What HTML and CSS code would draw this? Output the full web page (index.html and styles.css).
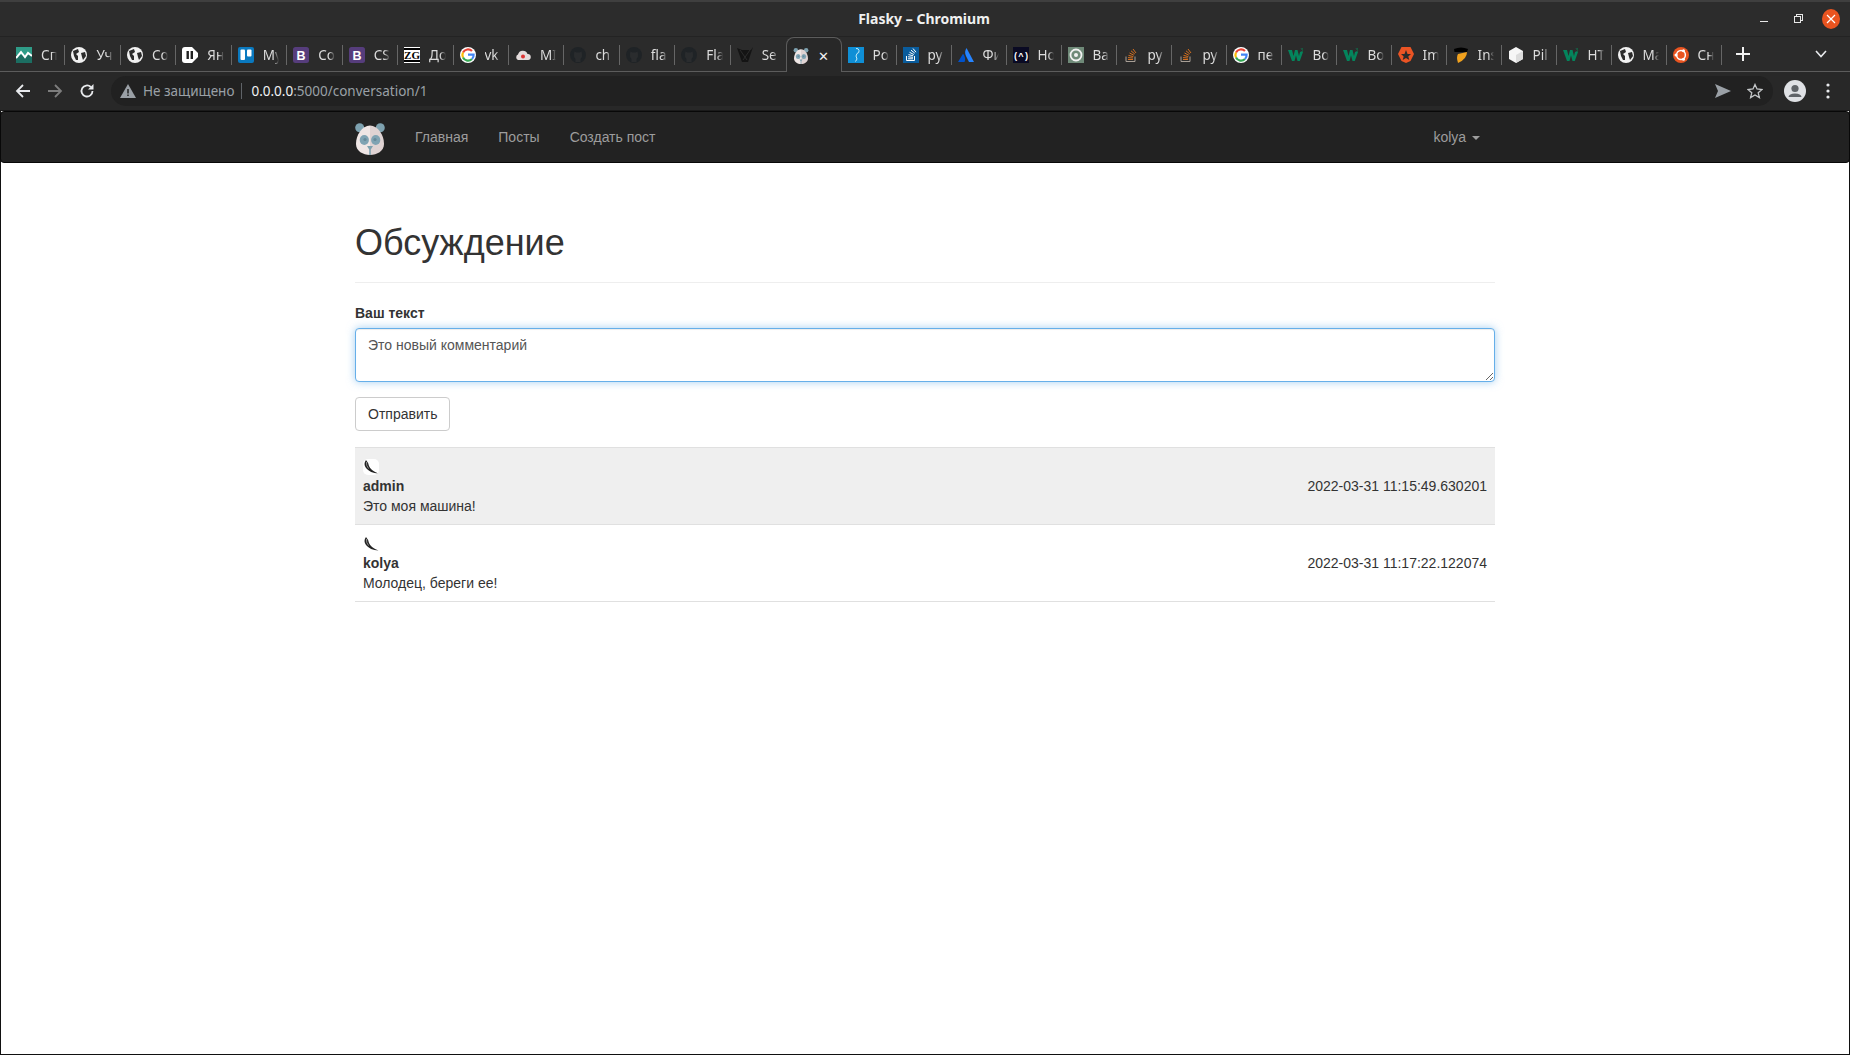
FILE: index.html
```html
<!DOCTYPE html>
<html>
    <head>
        <title>Flasky</title>
        <meta charset="utf-8">
        <link rel="stylesheet" href="styles.css">
    </head>
    <body>
        <svg class="defs" width="0" height="0">
            <symbol id="i-chart" viewBox="0 0 16 16"><rect width="16" height="16" fill="#1c6e62"/><rect width="16" height="8" fill="#2f9c88"/><path d="M0 11 L5 5 L9 10 L12 6 L16 9" fill="none" stroke="#fff" stroke-width="2"/></symbol>
            <symbol id="i-globe" viewBox="0 0 16 16"><circle cx="8" cy="8" r="8" fill="#f1f1f1"/><path d="M2 4 L7 2 L8 5 L5 7 L7 9 L7 13 L5 13 L3 9 Z M10 6 L14 5 L15 9 L12 13 L11 10 Z" fill="#2b2b2b"/></symbol>
            <symbol id="i-notion" viewBox="0 0 16 16"><path d="M3 0 H10 L16 6 V10 L10 16 H3 Q0 16 0 13 V3 Q0 0 3 0 Z" fill="#fff"/><rect x="4.5" y="4" width="2.4" height="8" fill="#222"/><rect x="8.6" y="4" width="2.4" height="8" fill="#222"/></symbol>
            <symbol id="i-trello" viewBox="0 0 16 16"><rect width="16" height="16" rx="2" fill="#0a79bf"/><rect x="2.5" y="2.5" width="4.5" height="10.5" rx="1" fill="#fff"/><rect x="9" y="2.5" width="4.5" height="7" rx="1" fill="#fff"/></symbol>
            <symbol id="i-boot" viewBox="0 0 16 16"><rect width="16" height="16" rx="2.5" fill="#563d7c"/><text x="8" y="12.5" text-anchor="middle" font-family="Liberation Sans" font-weight="700" font-size="12.5" fill="#fff">B</text></symbol>
            <symbol id="i-doc" viewBox="0 0 16 16"><rect width="16" height="16" fill="#fff"/><text x="8" y="12" text-anchor="middle" font-family="Liberation Serif" font-weight="700" font-size="11" fill="#000">ZG</text><rect y="1" width="16" height="2" fill="#000"/><rect y="13" width="16" height="2" fill="#000"/></symbol>
            <symbol id="i-google" viewBox="0 0 16 16"><circle cx="8" cy="8" r="8" fill="#fff"/><path d="M3 5.5 A5.6 5.6 0 0 1 12 4.1" fill="none" stroke="#ea4335" stroke-width="2.2"/><path d="M3 5.5 A5.6 5.6 0 0 0 3 10.5" fill="none" stroke="#fbbc05" stroke-width="2.2"/><path d="M3 10.5 A5.6 5.6 0 0 0 12 12" fill="none" stroke="#34a853" stroke-width="2.2"/><path d="M12 12 A5.6 5.6 0 0 0 13.6 7.6 H8" fill="none" stroke="#4285f4" stroke-width="2.2"/></symbol>
            <symbol id="i-cloud" viewBox="0 0 16 16"><path d="M3 13 A3 3 0 0 1 3 7.5 A5 5 0 0 1 12.5 7 A3 3 0 0 1 13 13 Z" fill="#e4dcdc"/><circle cx="8" cy="9.5" r="2" fill="#d33"/></symbol>
            <symbol id="i-github" viewBox="0 0 16 16"><circle cx="8" cy="8" r="8" fill="#1f2326"/><path d="M5.5 15 V12 Q3.5 10 4 7 L4.5 4.5 L6.5 5.5 H9.5 L11.5 4.5 L12 7 Q12.5 10 10.5 12 V15 Z" fill="#2a2c2e"/></symbol>
            <symbol id="i-selenium" viewBox="0 0 16 16"><path d="M0 1 L5 3 H14 L16 0 L11 15 H5 Z" fill="#141414"/><path d="M3 3 L10 13 M13 3 L6 13" stroke="#2c2c2c" stroke-width="1"/></symbol>
            <symbol id="i-panda" viewBox="0 0 30 32"><circle cx="4.7" cy="4.7" r="4.5" fill="#7ea2b0"/><circle cx="25.3" cy="4.7" r="4.5" fill="#7ea2b0"/><path d="M15 2.5 C7 2.5 1 12 1 21 C1 28 8 32 15 32 Z" fill="#efe6e5"/><path d="M15 2.5 C23 2.5 29 12 29 21 C29 28 22 32 15 32 Z" fill="#dfd3d3"/><ellipse cx="9.3" cy="17" rx="4.6" ry="5" fill="#7fa3b3"/><ellipse cx="20.7" cy="17" rx="4.6" ry="5" fill="#7fa3b3"/><circle cx="10" cy="16.5" r="1.6" fill="#66899a"/><circle cx="20" cy="16.5" r="1.6" fill="#66899a"/><path d="M12 23 H18 L15.8 26.5 V32 H14.2 V26.5 Z" fill="#7ea2b0"/></symbol>
            <symbol id="i-key" viewBox="0 0 16 16"><rect width="16" height="16" fill="#0f8fd6"/><path d="M8 1.5 A2.5 2.5 0 0 1 9 6.5 L8 9 L9 12 L7.5 14.5" fill="none" stroke="#c6ecf7" stroke-width="1"/></symbol>
            <symbol id="i-so-blue" viewBox="0 0 16 16"><rect width="16" height="16" fill="#0a5c9c"/><path d="M3.5 9 V13.5 H11.5 V9" fill="none" stroke="#fff" stroke-width="1"/><path d="M5 11.8 H10 M5 9.8 L10 10.3 M5.5 7.6 L10.2 8.8 M6.5 5.3 L10.8 7.5 M8 3.2 L11.8 6.2 M10 1.5 L13 5.2" stroke="#fff" stroke-width="1"/></symbol>
            <symbol id="i-atl" viewBox="0 0 16 16"><path d="M8.5 1 Q6 5 8 9 L11 15 H16 Z" fill="#2684ff"/><path d="M4.5 7.5 L0 15 H6.5 Q8 12 6 8 Q5 6.5 4.5 7.5 Z" fill="#0052cc"/></symbol>
            <symbol id="i-hc" viewBox="0 0 16 16"><rect width="16" height="16" fill="#0a0a23"/><text x="8" y="11.5" text-anchor="middle" font-family="Liberation Mono" font-weight="700" font-size="9" fill="#fff">(^)</text></symbol>
            <symbol id="i-target" viewBox="0 0 16 16"><rect width="16" height="16" fill="#6f8a78"/><circle cx="8" cy="8" r="5.5" fill="none" stroke="#f2f2f2" stroke-width="1.8"/><circle cx="8" cy="8" r="2" fill="#f2f2f2"/></symbol>
            <symbol id="i-so" viewBox="0 0 16 16"><path d="M3 9.5 V14.5 H12 V9.5" fill="none" stroke="#a89f96" stroke-width="1"/><path d="M5 12.5 H10 M5 10.6 L10 11 M5.5 8.4 L10.3 9.6 M6.5 6 L10.8 8.2 M8 3.8 L11.8 7 M10 2 L13 6" stroke="#d5701f" stroke-width="1"/></symbol>
            <symbol id="i-w3" viewBox="0 0 16 16"><path d="M0 3 H4 L5.5 9 L7 3 H9.5 L11 9 L12 5 H15 L11.8 14 H9.5 L8 8.5 L6.5 14 H4 Z" fill="#04845c"/><text x="14" y="5" text-anchor="middle" font-family="Liberation Sans" font-size="5" fill="#04845c">3</text></symbol>
            <symbol id="i-auth" viewBox="0 0 16 16"><path d="M3.5 0 H12.5 L16 7 L12.5 14 L8 16 L3.5 14 L0 7 Z" fill="#eb5424"/><path d="M8 3 L9.5 7 H13 L10.3 9.5 L11.3 13 L8 11 L4.7 13 L5.7 9.5 L3 7 H6.5 Z" fill="#2b2b2b"/></symbol>
            <symbol id="i-shield" viewBox="0 0 16 16"><path d="M1 2 Q8 -1 15 2 L14 5 H1.5 Z" fill="#000"/><path d="M14 5 Q14 12 5 16 Q3 10 5 7 Z" fill="#f0a11e"/></symbol>
            <symbol id="i-cube" viewBox="0 0 16 16"><path d="M8 0 L15 4 V12 L8 16 L1 12 V4 Z" fill="#f6f6f6"/><path d="M8 8 L15 4 V12 L8 16 Z" fill="#dcdcdc"/></symbol>
            <symbol id="i-ubuntu" viewBox="0 0 16 16"><circle cx="8" cy="8" r="8" fill="#e95420"/><circle cx="8" cy="8" r="4.4" fill="none" stroke="#fff" stroke-width="1.5"/><circle cx="3" cy="8" r="1.5" fill="#fff"/><circle cx="10.5" cy="3.7" r="1.5" fill="#fff"/><circle cx="10.5" cy="12.3" r="1.5" fill="#fff"/></symbol>
            <symbol id="i-avatar" viewBox="0 0 16 16"><path d="M3 1 Q0 5 3 9 Q7 14 15.5 14.5 Q8 12 6 7 Q5 3 3 1 Z" fill="#222"/><path d="M3.5 3 Q3 6.5 5.5 9.5" fill="none" stroke="#aaa" stroke-width="0.8"/></symbol>
        </svg>

        <div class="titleBar">
            <span class="titleText">Flasky – Chromium</span>
            <div class="winButtons">
                <span class="winMin"></span>
                <span class="winMax"></span>
                <span class="winClose">
                    <svg width="10" height="10" viewBox="0 0 10 10"><path d="M1 1 L9 9 M9 1 L1 9" stroke="#fff" stroke-width="1.2"/></svg>
                </span>
            </div>
        </div>

        <div class="tabStrip">
            <div class="tab"><svg class="fav"><use href="#i-chart"/></svg><span class="tabLabel">Список</span></div>
            <div class="tab"><svg class="fav"><use href="#i-globe"/></svg><span class="tabLabel">Учебник</span></div>
            <div class="tab"><svg class="fav"><use href="#i-globe"/></svg><span class="tabLabel">Course</span></div>
            <div class="tab"><svg class="fav"><use href="#i-notion"/></svg><span class="tabLabel">Яндекс</span></div>
            <div class="tab"><svg class="fav"><use href="#i-trello"/></svg><span class="tabLabel">My board</span></div>
            <div class="tab"><svg class="fav"><use href="#i-boot"/></svg><span class="tabLabel">Core</span></div>
            <div class="tab"><svg class="fav"><use href="#i-boot"/></svg><span class="tabLabel">CSS</span></div>
            <div class="tab"><svg class="fav"><use href="#i-doc"/></svg><span class="tabLabel">Доку</span></div>
            <div class="tab"><svg class="fav"><use href="#i-google"/></svg><span class="tabLabel">vk</span></div>
            <div class="tab"><svg class="fav"><use href="#i-cloud"/></svg><span class="tabLabel">MIME</span></div>
            <div class="tab"><svg class="fav"><use href="#i-github"/></svg><span class="tabLabel">ch</span></div>
            <div class="tab"><svg class="fav"><use href="#i-github"/></svg><span class="tabLabel">flask</span></div>
            <div class="tab"><svg class="fav"><use href="#i-github"/></svg><span class="tabLabel">Flask</span></div>
            <div class="tab noSep"><svg class="fav"><use href="#i-selenium"/></svg><span class="tabLabel">Se</span></div>
            <div class="tab active"><svg class="fav"><use href="#i-panda"/></svg><span class="tabClose">✕</span></div>
            <div class="tab"><svg class="fav"><use href="#i-key"/></svg><span class="tabLabel">Poetry</span></div>
            <div class="tab"><svg class="fav"><use href="#i-so-blue"/></svg><span class="tabLabel">py</span></div>
            <div class="tab"><svg class="fav"><use href="#i-atl"/></svg><span class="tabLabel">Фильтр</span></div>
            <div class="tab"><svg class="fav"><use href="#i-hc"/></svg><span class="tabLabel">Нow</span></div>
            <div class="tab"><svg class="fav"><use href="#i-target"/></svg><span class="tabLabel">Base</span></div>
            <div class="tab"><svg class="fav"><use href="#i-so"/></svg><span class="tabLabel">py</span></div>
            <div class="tab"><svg class="fav"><use href="#i-so"/></svg><span class="tabLabel">py</span></div>
            <div class="tab"><svg class="fav"><use href="#i-google"/></svg><span class="tabLabel">пер</span></div>
            <div class="tab"><svg class="fav"><use href="#i-w3"/></svg><span class="tabLabel">Bootstrap</span></div>
            <div class="tab"><svg class="fav"><use href="#i-w3"/></svg><span class="tabLabel">Bootstrap</span></div>
            <div class="tab"><svg class="fav"><use href="#i-auth"/></svg><span class="tabLabel">Image</span></div>
            <div class="tab"><svg class="fav"><use href="#i-shield"/></svg><span class="tabLabel">Insert</span></div>
            <div class="tab"><svg class="fav"><use href="#i-cube"/></svg><span class="tabLabel">Pillow</span></div>
            <div class="tab"><svg class="fav"><use href="#i-w3"/></svg><span class="tabLabel">HTML</span></div>
            <div class="tab"><svg class="fav"><use href="#i-globe"/></svg><span class="tabLabel">Main</span></div>
            <div class="tab"><svg class="fav"><use href="#i-ubuntu"/></svg><span class="tabLabel">Сн</span></div>
            <div class="newTab">
                <svg width="14" height="14" viewBox="0 0 14 14"><path d="M7 0 V14 M0 7 H14" stroke="#f1f1f1" stroke-width="2"/></svg>
            </div>
            <div class="tabSearch">
                <svg width="12" height="8" viewBox="0 0 12 8"><path d="M1 1 L6 6.5 L11 1" fill="none" stroke="#e8eaed" stroke-width="1.6"/></svg>
            </div>
        </div>

        <div class="toolbar">
            <svg class="tool" width="16" height="16" viewBox="0 0 16 16"><path d="M15 8 H2 M8 2 L2 8 L8 14" fill="none" stroke="#e8eaed" stroke-width="1.8"/></svg>
            <svg class="tool" width="16" height="16" viewBox="0 0 16 16"><path d="M1 8 H14 M8 2 L14 8 L8 14" fill="none" stroke="#7d7d7d" stroke-width="1.8"/></svg>
            <svg class="tool" width="16" height="16" viewBox="0 0 16 16"><path d="M13.5 8 A5.5 5.5 0 1 1 11.8 4" fill="none" stroke="#e8eaed" stroke-width="1.8"/><path d="M14.5 1 V6.5 H9 Z" fill="#e8eaed"/></svg>
            <div class="omnibox">
                <svg class="warnIcon" width="16" height="14" viewBox="0 0 16 14"><path d="M8 0 L16 14 H0 Z" fill="#9aa0a6"/><path d="M8 5 V9.5 M8 10.5 V12" stroke="#212121" stroke-width="1.5"/></svg>
                <span class="secure">Не защищено</span>
                <span class="omniSep"></span>
                <span class="url"><b>0.0.0.0</b>:5000/conversation/1</span>
                <span class="omniRight">
                    <svg width="16" height="14" viewBox="0 0 16 14"><path d="M0 0 L16 7 L0 14 L3 7 Z" fill="#9aa0a6"/></svg>
                    <svg width="16" height="16" viewBox="0 0 16 16"><path d="M8 1.5 L10 6 L15 6.5 L11.2 9.8 L12.4 14.6 L8 12 L3.6 14.6 L4.8 9.8 L1 6.5 L6 6 Z" fill="none" stroke="#c4c7c9" stroke-width="1.3"/></svg>
                </span>
            </div>
            <svg class="profile" width="22" height="22" viewBox="0 0 22 22"><circle cx="11" cy="11" r="11" fill="#dfe1e5"/><circle cx="11" cy="8.5" r="3.6" fill="#5f6368"/><path d="M4.5 17 Q5 13.5 11 13.5 Q17 13.5 17.5 17 Z" fill="#5f6368"/></svg>
            <svg class="menuDots" width="4" height="16" viewBox="0 0 4 16"><circle cx="2" cy="2" r="1.6" fill="#e8eaed"/><circle cx="2" cy="8" r="1.6" fill="#e8eaed"/><circle cx="2" cy="14" r="1.6" fill="#e8eaed"/></svg>
        </div>

        <div class="page">
            <nav class="navbar">
                <div class="container navInner">
                    <svg class="logo" width="30" height="32"><use href="#i-panda"/></svg>
                    <a class="navLink" href="#">Главная</a>
                    <a class="navLink" href="#">Посты</a>
                    <a class="navLink" href="#">Создать пост</a>
                    <a class="navLink userLink" href="#">kolya <span class="caret"></span></a>
                </div>
            </nav>

            <div class="container">
                <div class="pageHeader">
                    <h1>Обсуждение</h1>
                </div>

                <form>
                    <div class="formGroup">
                        <label class="fieldLabel" for="body">Ваш текст</label>
                        <textarea class="formControl" id="body" rows="2">Это новый комментарий</textarea>
                    </div>
                    <button class="btn" type="button">Отправить</button>
                </form>

                <ul class="comments">
                    <li class="comment own">
                        <div>
                            <div class="avatarLine">
                                <svg class="avatar"><use href="#i-avatar"/></svg>
                            </div>
                            <b>admin</b><br>
                            Это моя машина!
                        </div>
                        <div class="stamp">2022-03-31 11:15:49.630201</div>
                    </li>
                    <li class="comment">
                        <div>
                            <div class="avatarLine">
                                <svg class="avatar"><use href="#i-avatar"/></svg>
                            </div>
                            <b>kolya</b><br>
                            Молодец, береги ее!
                        </div>
                        <div class="stamp">2022-03-31 11:17:22.122074</div>
                    </li>
                </ul>
            </div>
        </div>
    </body>
</html>
```

FILE: styles.css
```css
*{
    box-sizing: border-box;
}
html, body{
    height: 100%;
}
body{
    margin: 0;
    display: flex;
    flex-direction: column;
    overflow: hidden;
    background: #2b2b2b;
    font-family: "Liberation Sans", sans-serif;
    font-size: 14px;
    line-height: 20px;
    color: #333333;
}
.defs{
    position: absolute;
}

/* browser window */
.titleBar{
    height: 37px;
    flex: none;
    display: flex;
    align-items: center;
    justify-content: center;
    padding-right: 2px;
    background: #2c2c2c;
    border-top: 2px solid #3f3f3f;
    border-bottom: 1px solid #232323;
    position: relative;
    font-family: "Noto Sans", sans-serif;
}
.titleText{
    color: #f0f0f0;
    font-size: 14px;
    font-weight: 700;
}
.winButtons{
    position: absolute;
    right: 10px;
    top: 7px;
    display: flex;
    align-items: center;
    gap: 21px;
}
.winMin{
    width: 8px;
    height: 1px;
    margin-top: 5px;
    margin-right: 5px;
    background: #e8e8e8;
}
.winMax{
    width: 7px;
    height: 7px;
    border: 1px solid #e8e8e8;
    box-shadow: 2px -2px 0 -1px #2c2c2c, 2px -2px 0 0 #e8e8e8;
}
.winClose{
    width: 18px;
    height: 20px;
    border-radius: 50%;
    background: #e95420;
    display: flex;
    align-items: center;
    justify-content: center;
}

.tabStrip{
    height: 35px;
    flex: none;
    display: flex;
    align-items: center;
    padding-left: 10px;
    background: #2b2b2b;
    border-bottom: 1px solid #5c5c5c;
    font-family: "Noto Sans", sans-serif;
    font-size: 13.5px;
    color: #dcdcdc;
}
.tab{
    width: 55.45px;
    height: 34px;
    flex: none;
    display: flex;
    align-items: center;
    padding: 1px 8px 0 6px;
    gap: 9px;
    position: relative;
    overflow: hidden;
}
.tab.active ~ .tab{
    width: 55px;
}
.tab::after{
    content: "";
    position: absolute;
    right: 0;
    top: 8px;
    height: 20px;
    width: 1px;
    background: #666666;
}
.tab.noSep::after, .tab.active::after{
    display: none;
}
.tab.active{
    height: 35px;
    margin-bottom: -1px;
    background: #282828;
    border: 1px solid #5c5c5c;
    border-bottom: 0;
    border-radius: 8px 8px 0 0;
    color: #f0f0f0;
}
.fav{
    width: 16px;
    height: 16px;
    flex: none;
}
.tabLabel{
    white-space: nowrap;
    overflow: hidden;
    flex: 1;
    -webkit-mask-image: linear-gradient(to right, #000 65%, transparent);
    mask-image: linear-gradient(to right, #000 65%, transparent);
}
.tabClose{
    font-size: 13px;
}
.newTab{
    margin-left: 14px;
    display: flex;
}
.tabSearch{
    margin-left: 65px;
    display: flex;
}

.toolbar{
    height: 39px;
    flex: none;
    display: flex;
    align-items: center;
    padding-left: 15px;
    gap: 16px;
    background: #282828;
    border-bottom: 1px solid #1a1a1a;
    font-family: "Noto Sans", sans-serif;
    font-size: 13.5px;
}
.omnibox{
    flex: 1;
    height: 30px;
    padding: 0 0 0 9px;
    display: flex;
    align-items: center;
    background: #212121;
    border-radius: 15px;
}
.warnIcon{
    margin-right: 7px;
}
.secure{
    color: #9aa0a6;
}
.omniSep{
    width: 1px;
    height: 16px;
    margin: 0 9px 0 7px;
    background: #5f6368;
}
.url{
    color: #9aa0a6;
}
.url b{
    font-weight: 400;
    color: #f1f3f4;
}
.omniRight{
    margin-left: auto;
    margin-right: 10px;
    display: flex;
    align-items: center;
    gap: 16px;
}
.profile{
    margin-left: -5px;
}
.menuDots{
    margin-left: 4px;
    margin-right: 20px;
}

/* page */
.page{
    flex: 1;
    background: #ffffff;
    border: 1px solid #111111;
    border-top: 0;
}
.container{
    width: 1170px;
    margin: 0 auto;
    padding: 0 15px;
}
.navbar{
    height: 52px;
    margin: 0 -1px;
    background: #222222;
    border: 1px solid #080808;
    border-radius: 4px;
}
.navInner{
    display: flex;
    align-items: center;
    height: 50px;
}
.logo{
    margin-right: 15px;
    margin-top: 3px;
}
.navLink{
    padding: 15px;
    color: #9d9d9d;
    text-decoration: none;
}
.userLink{
    margin-left: auto;
}
.caret{
    display: inline-block;
    width: 0;
    height: 0;
    margin-left: 2px;
    vertical-align: middle;
    border-top: 4px solid #9d9d9d;
    border-right: 4px solid transparent;
    border-left: 4px solid transparent;
}
.pageHeader{
    margin: 60px 0 20px;
    padding-bottom: 9px;
    border-bottom: 1px solid #eeeeee;
}
.pageHeader h1{
    margin: 0 0 10px;
    font-size: 36px;
    font-weight: 500;
    line-height: 1.1;
}
.formGroup{
    margin-bottom: 15px;
}
.fieldLabel{
    display: block;
    margin-bottom: 5px;
    font-weight: 700;
}
.formControl{
    display: block;
    width: 100%;
    padding: 6px 12px;
    font: inherit;
    color: #555555;
    background: #ffffff;
    border: 1px solid #66afe9;
    border-radius: 4px;
    outline: 0;
    box-shadow: inset 0 1px 1px rgba(0,0,0,.075), 0 0 8px rgba(102,175,233,.6);
}
.btn{
    display: block;
    height: 34px;
    padding: 6px 12px;
    font: inherit;
    color: #333333;
    background: #ffffff;
    border: 1px solid #cccccc;
    border-radius: 4px;
}
.comments{
    margin: 16px 0 0;
    padding: 0;
    list-style: none;
    border-top: 1px solid #e0e0e0;
}
.comment{
    display: flex;
    justify-content: space-between;
    align-items: center;
    padding: 8px;
    border-bottom: 1px solid #e0e0e0;
}
.comment.own{
    background: #efefef;
}
.avatarLine{
    height: 20px;
    padding-top: 3px;
}
.avatar{
    display: block;
    width: 16px;
    height: 16px;
    background: transparent;
}
.own .avatar{
    background: #ffffff;
    border-radius: 5px;
}
```
